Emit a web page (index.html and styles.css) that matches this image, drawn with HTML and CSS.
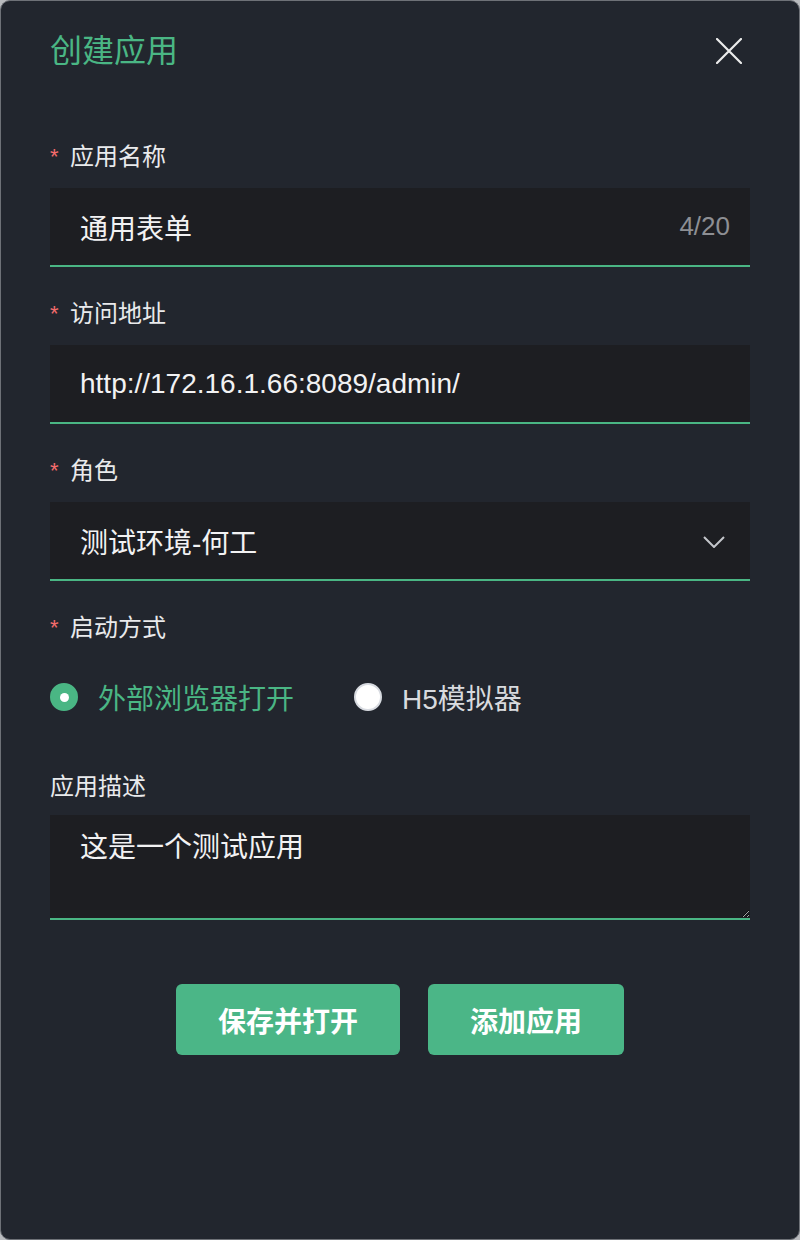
FILE: index.html
```html
<!DOCTYPE html>
<html lang="zh-CN">
<head>
<meta charset="utf-8">
<title>创建应用</title>
<link rel="stylesheet" href="styles.css">
</head>
<body>
<div class="dialog">
  <div class="header">
    <h1 class="title">创建应用</h1>
    <button class="close" aria-label="关闭">
      <svg width="26" height="26" viewBox="0 0 26 26"><path d="M1 1 L25 25 M25 1 L1 25" stroke="#ececec" stroke-width="2.2" fill="none" stroke-linecap="round"/></svg>
    </button>
  </div>

  <form class="form">
    <div class="item">
      <label class="label"><span class="req">*</span>应用名称</label>
      <div class="field">
        <input class="input" type="text" value="通用表单">
        <span class="count">4/20</span>
      </div>
    </div>

    <div class="item">
      <label class="label"><span class="req">*</span>访问地址</label>
      <div class="field">
        <input class="input" type="text" value="http://172.16.1.66:8089/admin/">
      </div>
    </div>

    <div class="item">
      <label class="label"><span class="req">*</span>角色</label>
      <div class="field select">
        <span class="select-value">测试环境-何工</span>
        <svg class="chevron" width="22" height="12" viewBox="0 0 22 12"><path d="M1 1 L11 11 L21 1" stroke="#c4c6cb" stroke-width="2" fill="none"/></svg>
      </div>
    </div>

    <div class="item">
      <label class="label"><span class="req">*</span>启动方式</label>
      <div class="radios">
        <label class="radio checked"><span class="dot"></span>外部浏览器打开</label>
        <label class="radio"><span class="dot"></span>H5模拟器</label>
      </div>
    </div>

    <div class="item desc">
      <label class="label">应用描述</label>
      <div class="field area">
        <textarea class="textarea">这是一个测试应用</textarea>
      </div>
    </div>

    <div class="actions">
      <button type="button" class="btn btn-wide">保存并打开</button>
      <button type="button" class="btn">添加应用</button>
    </div>
  </form>
</div>
</body>
</html>
```

FILE: styles.css
```css
* { box-sizing: border-box; }

html, body {
  margin: 0;
  padding: 0;
  background: #b9bbbe;
}

body {
  font-family: "Liberation Sans", "Noto Sans CJK SC", sans-serif;
  color: #e6e7e9;
}

.dialog {
  width: 800px;
  height: 1240px;
  background: #22262e;
  border: 1px solid #6e7177;
  border-radius: 10px;
  padding: 0 49px;
  overflow: hidden;
}

.header {
  display: flex;
  align-items: center;
  justify-content: space-between;
  height: 100px;
}

.title {
  margin: 0;
  font-size: 32px;
  font-weight: 400;
  color: #4ab684;
  line-height: 40px;
}

.close {
  background: none;
  border: 0;
  padding: 0;
  width: 26px;
  height: 26px;
  margin-right: 8px;
  display: flex;
}

.form {
  display: flex;
  flex-direction: column;
  padding-top: 38px;
}

.item {
  display: flex;
  flex-direction: column;
  margin-bottom: 29px;
}

.label {
  font-size: 24px;
  line-height: 36px;
  color: #e9eaec;
  margin-bottom: 13px;
  display: flex;
  align-items: center;
}

.req {
  color: #f56c6c;
  margin-right: 8px;
  font-size: 22px;
  width: 12px;
}

.field {
  position: relative;
  height: 79px;
  background: #1d1e22;
  border-bottom: 2px solid #4ab684;
  display: flex;
  align-items: center;
  padding: 0 20px 0 30px;
}

.input {
  flex: 1;
  min-width: 0;
  height: 100%;
  border: 0;
  outline: none;
  background: transparent;
  color: #f2f2f3;
  font-family: "Liberation Sans", "Noto Sans CJK SC", sans-serif;
  font-size: 28px;
  padding: 0;
}

.count {
  color: #8d8f94;
  font-size: 26px;
}

.select {
  justify-content: space-between;
  padding-right: 25px;
}

.select-value {
  font-size: 28px;
  color: #f2f2f3;
}

.chevron { display: block; margin-top: 3px; }

.radios {
  display: flex;
  align-items: center;
  gap: 60px;
  height: 56px;
  margin-top: 10px;
}

.radio {
  display: flex;
  align-items: center;
  gap: 20px;
  font-size: 28px;
  color: #d8dade;
}

.radio .dot {
  width: 28px;
  height: 28px;
  border-radius: 50%;
  background: #ffffff;
  border: 2px solid #d8dbe1;
  position: relative;
}

.radio.checked { color: #4ab684; }

.radio.checked .dot {
  background: #4ab684;
  border-color: #4ab684;
}

.radio.checked .dot::after {
  content: "";
  position: absolute;
  left: 50%;
  top: 50%;
  width: 9px;
  height: 9px;
  margin: -4.5px 0 0 -4.5px;
  border-radius: 50%;
  background: #ffffff;
}

.desc { margin-top: 15px; }

.desc .label { margin-bottom: 10px; }

.area {
  height: 105px;
  padding: 0;
  align-items: stretch;
}

.textarea {
  width: 100%;
  height: 100%;
  border: 0;
  outline: none;
  resize: vertical;
  background: transparent;
  color: #f2f2f3;
  font-family: "Liberation Sans", "Noto Sans CJK SC", sans-serif;
  font-size: 28px;
  line-height: 34px;
  padding: 16px 30px;
  color-scheme: dark;
}

.actions {
  display: flex;
  justify-content: center;
  gap: 28px;
  margin-top: 35px;
}

.btn {
  height: 71px;
  width: 196px;
  border: 0;
  border-radius: 6px;
  background: #4bb687;
  color: #ffffff;
  font-family: "Liberation Sans", "Noto Sans CJK SC", sans-serif;
  font-size: 28px;
  font-weight: 700;
}

.btn-wide { width: 224px; }
```
